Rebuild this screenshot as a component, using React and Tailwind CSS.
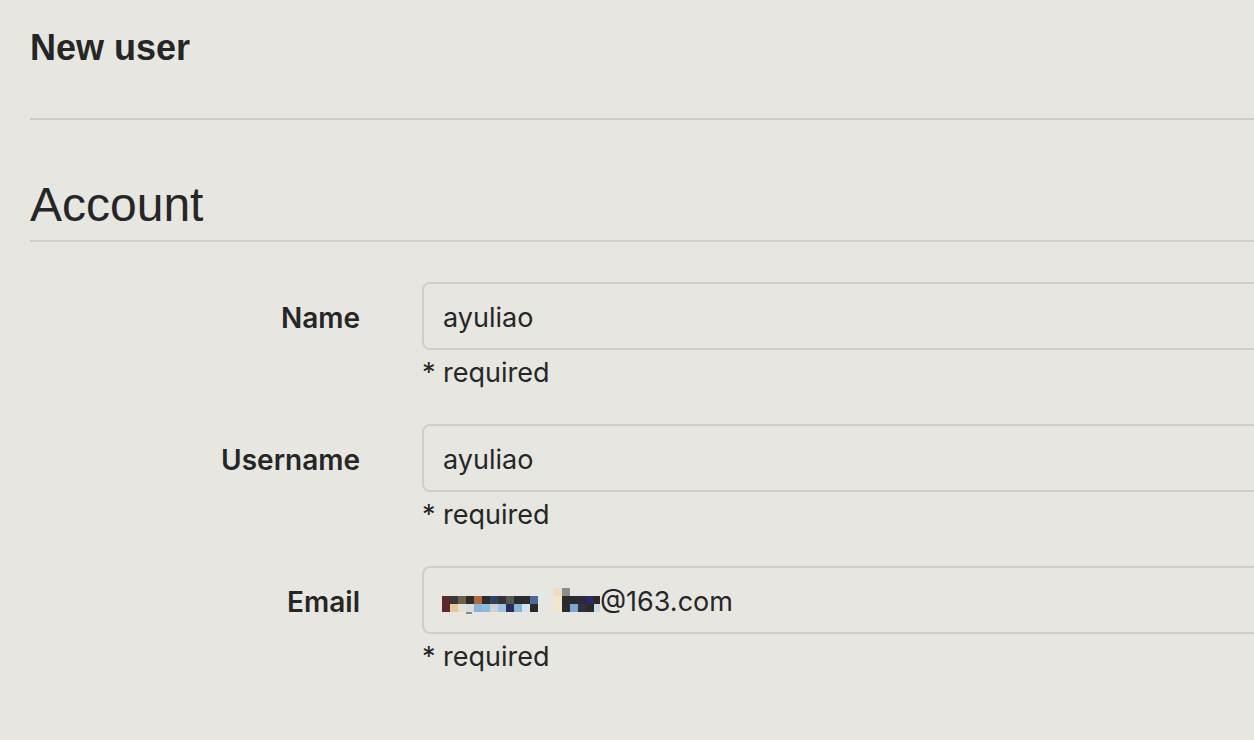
import React from 'react';

const heading = { fontFamily: '"Liberation Sans", Arial, sans-serif' };
const ui = { fontFamily: 'Inter, "Noto Sans", sans-serif' };

// blurred part of the email address, drawn as a mosaic
const mosaic = [
  // top row
  [0, 10, 8, '#5c2a2e'], [8, 10, 8, '#3a3838'], [16, 10, 8, '#6e5e4a'], [24, 10, 8, '#2c2c30'],
  [32, 10, 8, '#b0693e'], [40, 10, 8, '#2a2c2e'], [48, 10, 8, '#2c4260'], [56, 10, 8, '#333335'],
  [64, 10, 8, '#4e5a52'], [72, 10, 8, '#2a2a2c'], [80, 10, 8, '#2c2c2e'], [88, 10, 8, '#4a6a9c'],
  // bottom row
  [0, 18, 8, '#5c2a2e'], [8, 18, 8, '#e8c898'], [16, 18, 8, '#e2e0dc'], [24, 18, 8, '#dcdcdc'],
  [32, 18, 8, '#88b4d8'], [40, 18, 8, '#8cbcdc'], [48, 18, 8, '#d0d0d4'], [56, 18, 8, '#9cc4e4'],
  [64, 18, 8, '#2c2c5c'], [72, 18, 8, '#84b8d8'], [80, 18, 8, '#d4e4ec'], [88, 18, 8, '#2a2a2a'],
  // stray bits
  [96, 4, 6, '#dcecec'],
  // second group
  [112, 2, 8, '#f0dcc0'], [112, 10, 16, '#f2e6cc'],
  [120, 2, 8, '#8c8c8c'], [120, 10, 8, '#2a2a2a'], [120, 18, 8, '#2c2c2e'],
  [128, 10, 8, '#2a2a30'], [128, 18, 8, '#7aa8d0'],
  [136, 10, 8, '#2a2a3a'], [136, 18, 8, '#303038'],
  [144, 10, 8, '#2a2a60'], [144, 18, 8, '#2a2a2a'],
  [152, 10, 8, '#2a2a2a'], [152, 18, 8, '#c8dce8'],
];

function Mosaic() {
  return (
    <svg width="158" height="28" viewBox="0 0 158 28" className="shrink-0 -ml-[1px] -mt-[4px]">
      {mosaic.map(([x, y, h, c], i) => (
        <rect key={i} x={x} y={y} width="8" height={h} fill={c} />
      ))}
      <rect x="24" y="26" width="6" height="2" fill="#888888" />
    </svg>
  );
}

function Field({ label, children }) {
  return (
    <div className="flex">
      <div className="w-[330px] shrink-0 h-[68px] pt-[4px] flex items-center justify-end text-[28px] font-semibold text-[#262626]">
        {label}
      </div>
      <div className="ml-[62px] w-[900px] shrink-0">
        <div className="h-[68px] border-2 border-[#d2cdc6] rounded-[8px] flex items-center pl-[19px] pt-[4px] text-[27px] text-[#262626] bg-[#e8e6e1]">
          {children}
        </div>
        <div className="mt-[7px] leading-[32px] text-[27px] text-[#262626]">* required</div>
      </div>
    </div>
  );
}

export default function App() {
  return (
    <div className="min-h-screen w-[1254px] h-[740px] overflow-hidden bg-[#e8e6e1] pl-[30px]">
      <div className="pt-[28px] pb-[50px] border-b-2 border-[#d0ccc5]">
        <h1 className="text-[36px] leading-[40px] font-bold text-[#262626]" style={heading}>
          New user
        </h1>
      </div>
      <h2
        className="mt-[57px] text-[48px] leading-[56px] pb-[7px] border-b-2 border-[#d4cec9] text-[#262626]"
        style={heading}
      >
        Account
      </h2>
      <div className="mt-[40px] flex flex-col gap-[35px]" style={ui}>
        <Field label="Name">ayuliao</Field>
        <Field label="Username">ayuliao</Field>
        <Field label="Email">
          <Mosaic />
          <span>@163.com</span>
        </Field>
      </div>
    </div>
  );
}
